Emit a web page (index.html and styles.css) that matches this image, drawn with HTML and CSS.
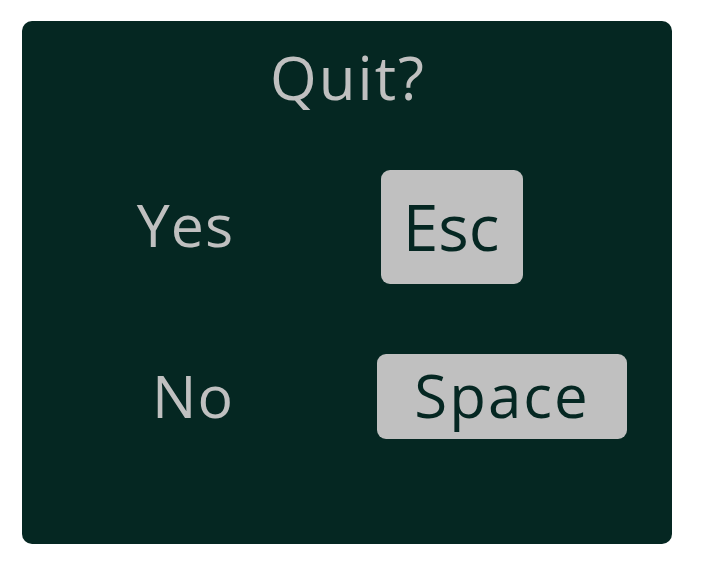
FILE: index.html
```html
<!DOCTYPE html>
<html>
<head>
<meta charset="utf-8">
<link rel="stylesheet" href="styles.css">
</head>
<body>
<div class="panel">
  <div class="title">Quit?</div>
  <div class="options">
    <div class="label label-yes">Yes</div>
    <div class="key key-esc">Esc</div>
    <div class="label label-no">No</div>
    <div class="key key-space">Space</div>
  </div>
</div>
</body>
</html>
```

FILE: styles.css
```css
html, body {
  margin: 0;
  padding: 0;
  background: #ffffff;
}
body {
  font-family: "Open Sans", "Noto Sans", sans-serif;
}
.panel {
  margin: 21px 0 0 22px;
  width: 650px;
  height: 523px;
  box-sizing: border-box;
  background: #052722;
  border-radius: 10px;
  padding-top: 26px;
  display: flex;
  flex-direction: column;
}
.title {
  color: #c0c0c0;
  font-size: 60px;
  line-height: 60px;
  text-align: center;
  letter-spacing: 2px;
  padding-left: 2px;
}
.options {
  margin-top: 63px;
  display: grid;
  grid-template-columns: 212px 1fr;
  grid-template-rows: 114px 85px;
  column-gap: 143px;
  row-gap: 70px;
  align-items: center;
}
.label {
  color: #c0c0c0;
  font-size: 59px;
  line-height: 60px;
  text-align: right;
  letter-spacing: 1px;
}
.label-yes {
  margin-top: -6px;
}
.label-no {
  margin-top: -4px;
}
.key {
  background: #c0c0c0;
  color: #052722;
  border-radius: 9px;
  display: flex;
  align-items: center;
  justify-content: center;
  box-sizing: border-box;
}
.key-esc {
  width: 142px;
  height: 114px;
  margin-left: 4px;
  font-size: 64px;
  line-height: 64px;
  letter-spacing: 0;
  padding-right: 2px;
}
.key-space {
  width: 250px;
  height: 85px;
  font-size: 60px;
  line-height: 60px;
  letter-spacing: 2px;
  padding-bottom: 4px;
}
```
